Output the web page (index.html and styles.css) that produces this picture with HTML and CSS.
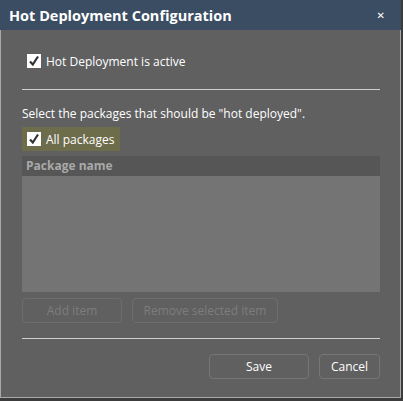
FILE: index.html
```html
<!DOCTYPE html>
<html lang="en">
<head>
  <meta charset="UTF-8">
  <title>Hot Deployment Configuration</title>
  <link rel="stylesheet" href="styles.css">
</head>
<body>
  <div class="dialog">
    <div class="titlebar">
      <span class="title">Hot Deployment Configuration</span>
      <span class="close">&#x2715;</span>
    </div>
    <div class="content">
      <label class="check active-row">
        <span class="box"><svg width="12" height="12" viewBox="0 0 12 12"><path d="M2 6.5 L4.8 9.5 L10 1.5" fill="none" stroke="#333" stroke-width="2.2"/></svg></span>
        Hot Deployment is active
      </label>
      <hr class="top-rule">
      <p class="hint">Select the packages that should be "hot deployed".</p>
      <label class="check all-row">
        <span class="box"><svg width="12" height="12" viewBox="0 0 12 12"><path d="M2 6.5 L4.8 9.5 L10 1.5" fill="none" stroke="#333" stroke-width="2.2"/></svg></span>
        All packages
      </label>
      <div class="grid">
        <div class="grid-head">Package name</div>
        <div class="grid-body"></div>
      </div>
      <div class="row-buttons">
        <button class="btn disabled add">Add item</button>
        <button class="btn disabled remove">Remove selected item</button>
      </div>
      <hr class="bottom-rule">
      <div class="footer">
        <button class="btn save">Save</button>
        <button class="btn cancel">Cancel</button>
      </div>
    </div>
  </div>
</body>
</html>
```

FILE: styles.css
```css
body { margin: 0; background: #3c3c3c; font-family: "Open Sans", "DejaVu Sans", sans-serif; }
.dialog { width: 399px; height: 397px; background: #606060; border: 1px solid #a8a8a8; border-top: none; }
.titlebar { height: 30px; background: #3b4d63; display: flex; align-items: center; justify-content: space-between; padding: 0 16px 0 9px; color: #fff; margin-left: -1px; margin-right: -1px; }
.title { font-size: 14.5px; font-weight: bold; }
.close { font-size: 10px; font-weight: bold; }
.content { padding: 0 20px 0 21px; color: #fff; font-size: 12px; }
.check { display: flex; align-items: center; gap: 5px; }
.box { width: 14px; height: 14px; background: #fff; display: flex; align-items: center; justify-content: center; }
.active-row { margin: 23px 0 0 5px; height: 16px; }
hr { border: none; border-top: 1px solid #cfcfcf; margin: 0; height: 0; }
.top-rule { margin-top: 20px; }
.hint { margin: 16px 0 0; line-height: 16px; }
.all-row { margin-top: 5px; width: 98px; height: 24px; background: #6d6c4b; padding-left: 5px; box-sizing: border-box; }
.grid { margin-top: 5px; }
.grid-head { height: 20px; background: #565656; color: #a9a9a9; font-weight: bold; line-height: 20px; padding-left: 4px; }
.grid-body { height: 116px; background: #747474; }
.row-buttons { display: flex; gap: 10px; margin-top: 6px; }
.btn { font-family: inherit; font-size: 12px; height: 25px; background: transparent; border: 1px solid #6e6e6e; border-radius: 4px; color: #fff; padding: 0; }
.disabled { color: #7d7d7d; }
.add { width: 100px; }
.remove { width: 146px; }
.bottom-rule { margin-top: 15px; }
.footer { display: flex; justify-content: flex-end; gap: 10px; margin-top: 15px; }
.save { width: 100px; border-color: #767676; }
.cancel { width: 61px; border-color: #767676; }
```
